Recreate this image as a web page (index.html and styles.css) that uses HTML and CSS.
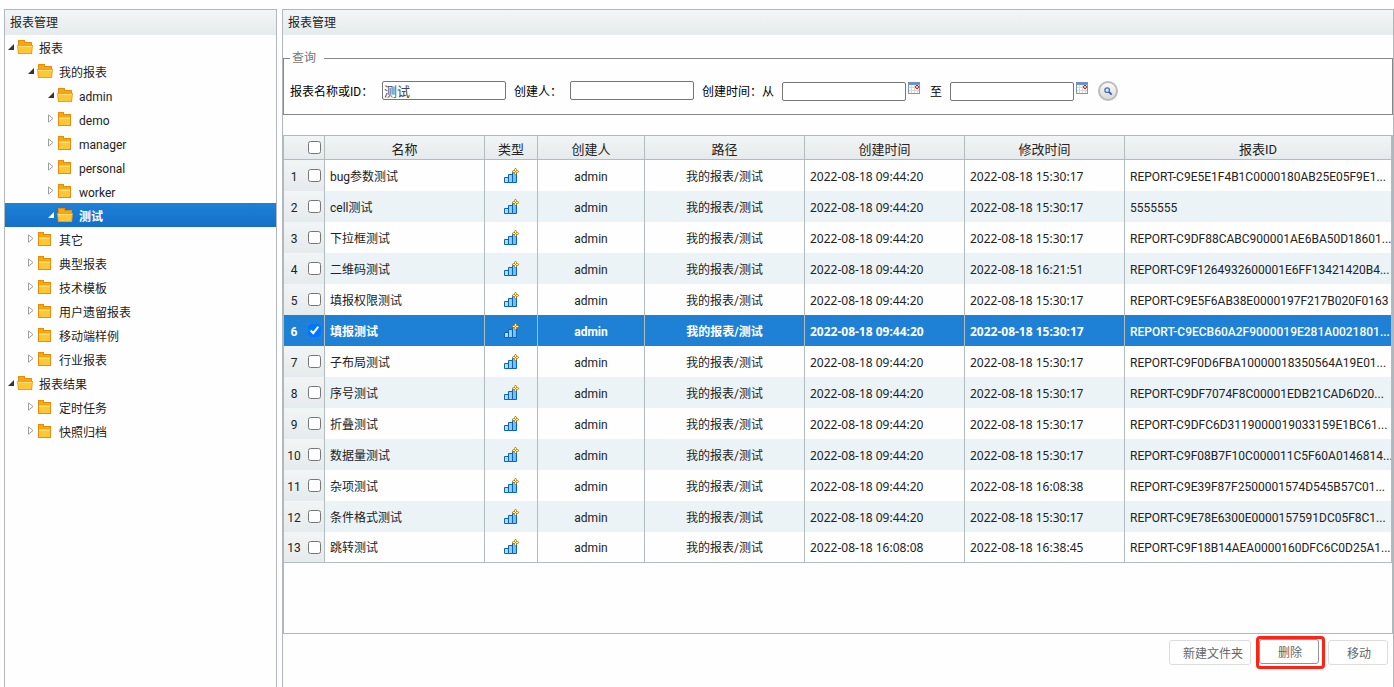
FILE: index.html
```
<!DOCTYPE html>
<html lang="zh-CN">
<head>
<meta charset="utf-8">
<title>报表管理</title>
<link rel="stylesheet" href="styles.css">
</head>
<body>
<svg class="defs" width="0" height="0" aria-hidden="true">
  <defs>
    <linearGradient id="bar" x1="0" x2="1" y1="0" y2="0"><stop offset="0" stop-color="#c0e5ff"/><stop offset="1" stop-color="#62b8fa"/></linearGradient>
    <symbol id="open" viewBox="0 0 16 14"><path d="M1 0h7v2h7v4H1z" fill="#f7a80b"/><path d="M1.500 5V.5h6v2h7V5" fill="none" stroke="#e78a10"/><path d="M0 5h16l-1 9H1z" fill="#f0a010"/><path d="M1 6h14l-1 7H2z" fill="#ffc733"/><path d="M1 6.500h14" stroke="#ffe07a"/></symbol>
    <symbol id="closed" viewBox="0 0 16 14"><path d="M1 0h6v2h7v12H1z" fill="#e88c10"/><path d="M2 1h4v2h7v3H2z" fill="#f7a900"/><path d="M2 5h11v8H2z" fill="#ffc733"/><path d="M2 6.500h11" stroke="#ffe07a"/></symbol>
    <symbol id="down" viewBox="0 0 6 6"><path d="M6 0v6H0z" fill="currentColor"/></symbol>
    <symbol id="right" viewBox="0 0 6 9"><path d="M.5.900v7.200L5 4.500z" fill="#fff" stroke="#a0a0a0"/></symbol>
    <symbol id="chart" viewBox="0 0 16 16"><path d="M1.500 14.500v-5h4v5zM5.500 14.500v-8h4v8zM9.500 14.500v-10h4v10z" fill="url(#bar)" stroke="#0b64b8"/><path d="M12 0h1l1 2 2 1v1l-2 1-1 2h-1l-1-2-2-1V3l2-1z" fill="#b88a1a"/><path d="M12 1h1v2h2v1h-2v2h-1V4h-2V3h2z" fill="#fff4b8"/><path d="M12 3h1v1h-1z" fill="#b88a1a"/></symbol>
    <symbol id="calendar" viewBox="0 0 12 12"><path d="M0 0h12v12H0z" fill="#7898c4"/><path d="M1 3h10v8H1z" fill="#fff"/><path d="M0 1h12" stroke="#6d90c2" stroke-width="2"/><path d="M1 5.500h10M1 8.500h10M3.500 3v8M6.500 3v8M9.500 3v8" stroke="#ddd6cf"/><circle cx="9" cy="5" r="1.500" fill="#fff" stroke="#9d1820"/></symbol>
  </defs>
</svg>
<div class="layout">
  <aside class="panel side">
    <h1 class="panel-title">报表管理</h1>
    <ul class="tree">
      <li class="node l1"><svg class="arrow open"><use href="#down"/></svg><svg class="folder"><use href="#open"/></svg>报表</li>
      <li class="node l2"><svg class="arrow open"><use href="#down"/></svg><svg class="folder"><use href="#open"/></svg>我的报表</li>
      <li class="node l3"><svg class="arrow open"><use href="#down"/></svg><svg class="folder"><use href="#open"/></svg>admin</li>
      <li class="node l3"><svg class="arrow"><use href="#right"/></svg><svg class="folder"><use href="#closed"/></svg>demo</li>
      <li class="node l3"><svg class="arrow"><use href="#right"/></svg><svg class="folder"><use href="#closed"/></svg>manager</li>
      <li class="node l3"><svg class="arrow"><use href="#right"/></svg><svg class="folder"><use href="#closed"/></svg>personal</li>
      <li class="node l3"><svg class="arrow"><use href="#right"/></svg><svg class="folder"><use href="#closed"/></svg>worker</li>
      <li class="node l3 current"><svg class="arrow open"><use href="#down"/></svg><svg class="folder"><use href="#open"/></svg>测试</li>
      <li class="node l2"><svg class="arrow"><use href="#right"/></svg><svg class="folder"><use href="#closed"/></svg>其它</li>
      <li class="node l2"><svg class="arrow"><use href="#right"/></svg><svg class="folder"><use href="#closed"/></svg>典型报表</li>
      <li class="node l2"><svg class="arrow"><use href="#right"/></svg><svg class="folder"><use href="#closed"/></svg>技术模板</li>
      <li class="node l2"><svg class="arrow"><use href="#right"/></svg><svg class="folder"><use href="#closed"/></svg>用户遗留报表</li>
      <li class="node l2"><svg class="arrow"><use href="#right"/></svg><svg class="folder"><use href="#closed"/></svg>移动端样例</li>
      <li class="node l2"><svg class="arrow"><use href="#right"/></svg><svg class="folder"><use href="#closed"/></svg>行业报表</li>
      <li class="node l1"><svg class="arrow open"><use href="#down"/></svg><svg class="folder"><use href="#open"/></svg>报表结果</li>
      <li class="node l2"><svg class="arrow"><use href="#right"/></svg><svg class="folder"><use href="#closed"/></svg>定时任务</li>
      <li class="node l2"><svg class="arrow"><use href="#right"/></svg><svg class="folder"><use href="#closed"/></svg>快照归档</li>
    </ul>
  </aside>
  <main class="panel main">
    <h2 class="panel-title">报表管理</h2>
    <fieldset class="query">
      <legend>查询</legend>
      <div class="fields">
        <label class="field name-field"><span>报表名称或ID：</span><input type="text" value="测试"></label>
        <label class="field author-field"><span>创建人：</span><input type="text"></label>
        <label class="field from-field"><span>创建时间：从</span><input type="text"></label>
        <button type="button" class="pick" aria-label="选择开始日期"><svg><use href="#calendar"/></svg></button>
        <label class="field to-field"><span>至</span><input type="text"></label>
        <button type="button" class="pick" aria-label="选择结束日期"><svg><use href="#calendar"/></svg></button>
        <button type="button" class="search" aria-label="查询"><svg viewBox="0 0 10 10"><circle cx="3.500" cy="3.500" r="2.500" fill="#e4efff" stroke="#4a6fc0" stroke-width="1.500"/><path d="m5.500 5.500 3 3" stroke="#3558b0" stroke-width="2"/></svg></button>
      </div>
    </fieldset>
    <div class="grid-box">
      <table class="grid">
        <colgroup><col class="c-no"><col class="c-wide"><col class="c-type"><col class="c-author"><col class="c-wide"><col class="c-wide"><col class="c-wide"><col></colgroup>
        <thead><tr><th class="no"><div><span></span><input type="checkbox" aria-label="全选"></div></th><th>名称</th><th>类型</th><th>创建人</th><th>路径</th><th>创建时间</th><th>修改时间</th><th>报表ID</th></tr></thead>
        <tbody>
        <tr><td class="no"><div><span>1</span><input type="checkbox" aria-label="选择第1行"></div></td><td>bug参数测试</td><td class="mid"><svg class="chart"><use href="#chart"/></svg></td><td class="mid">admin</td><td class="mid">我的报表/测试</td><td class="time">2022-08-18 09:44:20</td><td class="time">2022-08-18 15:30:17</td><td>REPORT-C9E5E1F4B1C0000180AB25E05F9E1...</td></tr>
        <tr><td class="no"><div><span>2</span><input type="checkbox" aria-label="选择第2行"></div></td><td>cell测试</td><td class="mid"><svg class="chart"><use href="#chart"/></svg></td><td class="mid">admin</td><td class="mid">我的报表/测试</td><td class="time">2022-08-18 09:44:20</td><td class="time">2022-08-18 15:30:17</td><td>5555555</td></tr>
        <tr><td class="no"><div><span>3</span><input type="checkbox" aria-label="选择第3行"></div></td><td>下拉框测试</td><td class="mid"><svg class="chart"><use href="#chart"/></svg></td><td class="mid">admin</td><td class="mid">我的报表/测试</td><td class="time">2022-08-18 09:44:20</td><td class="time">2022-08-18 15:30:17</td><td>REPORT-C9DF88CABC900001AE6BA50D18601...</td></tr>
        <tr><td class="no"><div><span>4</span><input type="checkbox" aria-label="选择第4行"></div></td><td>二维码测试</td><td class="mid"><svg class="chart"><use href="#chart"/></svg></td><td class="mid">admin</td><td class="mid">我的报表/测试</td><td class="time">2022-08-18 09:44:20</td><td class="time">2022-08-18 16:21:51</td><td>REPORT-C9F1264932600001E6FF13421420B4...</td></tr>
        <tr><td class="no"><div><span>5</span><input type="checkbox" aria-label="选择第5行"></div></td><td>填报权限测试</td><td class="mid"><svg class="chart"><use href="#chart"/></svg></td><td class="mid">admin</td><td class="mid">我的报表/测试</td><td class="time">2022-08-18 09:44:20</td><td class="time">2022-08-18 15:30:17</td><td>REPORT-C9E5F6AB38E0000197F217B020F0163</td></tr>
        <tr class="current"><td class="no"><div><span>6</span><input type="checkbox" checked aria-label="选择第6行"></div></td><td>填报测试</td><td class="mid"><svg class="chart"><use href="#chart"/></svg></td><td class="mid">admin</td><td class="mid">我的报表/测试</td><td class="time">2022-08-18 09:44:20</td><td class="time">2022-08-18 15:30:17</td><td class="id">REPORT-C9ECB60A2F9000019E281A0021801...</td></tr>
        <tr><td class="no"><div><span>7</span><input type="checkbox" aria-label="选择第7行"></div></td><td>子布局测试</td><td class="mid"><svg class="chart"><use href="#chart"/></svg></td><td class="mid">admin</td><td class="mid">我的报表/测试</td><td class="time">2022-08-18 09:44:20</td><td class="time">2022-08-18 15:30:17</td><td>REPORT-C9F0D6FBA10000018350564A19E01...</td></tr>
        <tr><td class="no"><div><span>8</span><input type="checkbox" aria-label="选择第8行"></div></td><td>序号测试</td><td class="mid"><svg class="chart"><use href="#chart"/></svg></td><td class="mid">admin</td><td class="mid">我的报表/测试</td><td class="time">2022-08-18 09:44:20</td><td class="time">2022-08-18 15:30:17</td><td>REPORT-C9DF7074F8C00001EDB21CAD6D20...</td></tr>
        <tr><td class="no"><div><span>9</span><input type="checkbox" aria-label="选择第9行"></div></td><td>折叠测试</td><td class="mid"><svg class="chart"><use href="#chart"/></svg></td><td class="mid">admin</td><td class="mid">我的报表/测试</td><td class="time">2022-08-18 09:44:20</td><td class="time">2022-08-18 15:30:17</td><td>REPORT-C9DFC6D3119000019033159E1BC61...</td></tr>
        <tr><td class="no"><div><span>10</span><input type="checkbox" aria-label="选择第10行"></div></td><td>数据量测试</td><td class="mid"><svg class="chart"><use href="#chart"/></svg></td><td class="mid">admin</td><td class="mid">我的报表/测试</td><td class="time">2022-08-18 09:44:20</td><td class="time">2022-08-18 15:30:17</td><td>REPORT-C9F08B7F10C000011C5F60A0146814...</td></tr>
        <tr><td class="no"><div><span>11</span><input type="checkbox" aria-label="选择第11行"></div></td><td>杂项测试</td><td class="mid"><svg class="chart"><use href="#chart"/></svg></td><td class="mid">admin</td><td class="mid">我的报表/测试</td><td class="time">2022-08-18 09:44:20</td><td class="time">2022-08-18 16:08:38</td><td>REPORT-C9E39F87F2500001574D545B57C01...</td></tr>
        <tr><td class="no"><div><span>12</span><input type="checkbox" aria-label="选择第12行"></div></td><td>条件格式测试</td><td class="mid"><svg class="chart"><use href="#chart"/></svg></td><td class="mid">admin</td><td class="mid">我的报表/测试</td><td class="time">2022-08-18 09:44:20</td><td class="time">2022-08-18 15:30:17</td><td>REPORT-C9E78E6300E0000157591DC05F8C1...</td></tr>
        <tr><td class="no"><div><span>13</span><input type="checkbox" aria-label="选择第13行"></div></td><td>跳转测试</td><td class="mid"><svg class="chart"><use href="#chart"/></svg></td><td class="mid">admin</td><td class="mid">我的报表/测试</td><td class="time">2022-08-18 16:08:08</td><td class="time">2022-08-18 16:38:45</td><td>REPORT-C9F18B14AEA0000160DFC6C0D25A1...</td></tr>
        </tbody>
      </table>
    </div>
    <div class="actions">
      <button type="button" class="btn">新建文件夹</button>
      <span class="mark"><button type="button" class="btn focus">删除</button></span>
      <button type="button" class="btn">移动</button>
    </div>
  </main>
</div>
</body>
</html>
```
FILE: styles.css
```
* { box-sizing: border-box; }
body {
  margin: 0;
  background: #fefefe;
  color: #222;
  font: 12px/18px Roboto, "Noto Sans CJK SC", sans-serif;
}
button, input { font: inherit; }
.defs { position: absolute; }
.layout {
  display: flex;
  gap: 5px;
  min-height: 100vh;
  padding: 9px 0 0 4px;
}
.panel { border: 1px solid #b1b7be; border-bottom: 0; }
.side { flex: 0 0 273px; }
.main { flex: 1; min-width: 0; }
.panel-title {
  height: 25px;
  margin: 0;
  padding: 0 5px;
  background: linear-gradient(#f3f6f7, #e5eaec);
  font-size: 12px;
  font-weight: 400;
  line-height: 27px;
}

.tree { margin: 0; padding: 0; list-style: none; line-height: 28px; }
.node { display: flex; height: 24px; padding-left: 3px; }
.node.l2 { padding-left: 23px; }
.node.l3 { padding-left: 43px; }
.node.current {
  background: linear-gradient(#1e81d6, #146fca);
  color: #fff;
  font-weight: 700;
}
.arrow { width: 6px; height: 9px; margin: 7px 3px 0 0; }
.arrow.open { height: 6px; margin-top: 9px; color: #333; }
.current .arrow.open { color: #fff; }
.folder { width: 16px; height: 14px; margin: 5px 6px 0 0; }

.query {
  min-width: 0;
  margin: 14px 0 20px;
  padding: 0 6px 13px;
  border: 1px solid #888;
}
.query legend {
  width: 34px;
  padding: 0 2px;
  color: #777;
}
.fields {
  display: flex;
  align-items: center;
  padding-top: 14px;
  color: #000;
}
.field { display: flex; align-items: center; }
.field span { padding-top: 2px; }
.field input {
  width: 124px;
  height: 19px;
  padding: 0 1px;
  border: 1px solid #767676;
  border-radius: 2px;
  background: #fff;
  color: #444;
  font-size: 13px;
}
.name-field span { width: 92px; }
.author-field span { width: 56px; }
.author-field, .from-field { margin-left: 8px; }
.from-field span { width: 80px; }
.to-field { margin-left: 10px; }
.to-field span { width: 20px; }
.name-field, .author-field { align-items: flex-start; }
.from-field, .to-field { align-items: flex-end; }
.pick {
  align-self: flex-start;
  width: 12px;
  height: 13px;
  margin-left: 2px;
  padding: 1px 0 0;
  border: 0;
  background: none;
}
.pick svg { display: block; width: 12px; height: 12px; }
.search {
  display: grid;
  place-items: center;
  width: 20px;
  height: 20px;
  margin-left: 10px;
  padding: 0;
  border: 2px solid #bbb;
  border-radius: 50%;
  background: linear-gradient(#fafafa, #d9d9d9);
}
.search svg { width: 9px; height: 9px; }

.grid-box {
  min-height: 499px;
  border: 1px solid #b1b7be;
}
.grid { width: 100%; table-layout: fixed; border-spacing: 0; }
.c-no { width: 41px; }
.c-wide { width: 160px; }
.c-type { width: 53px; }
.c-author { width: 107px; }
.grid th, .grid td {
  overflow: hidden;
  padding: 2px 0 0 5px;
  border-right: 1px solid #b1bcbf;
  text-align: left;
  white-space: nowrap;
}
.grid th {
  height: 24px;
  padding: 4px 0 0;
  border-bottom: 1px solid #b1bcbf;
  background: linear-gradient(#f2f5f6, #e5eaec);
  font-size: 13px;
  font-weight: 400;
  line-height: 18px;
  text-align: center;
}
.grid td { height: 31px; }
.grid tbody tr:nth-child(even) { background: #ebf3f6; }
.grid tbody tr:last-child td { border-bottom: 1px solid #b1bcbf; }
.grid .mid { padding-left: 0; text-align: center; }
.grid .time { font-family: "Noto Sans", sans-serif; }
.grid .no { padding: 0; }
.grid td.no { background: linear-gradient(#f2f5f6, #e5eaec); }
.no div { display: flex; align-items: center; }
.no span { width: 20px; padding-top: 2px; text-align: center; }
.no input { width: 13px; height: 13px; margin: 0 0 0 4px; }
.grid tbody tr.current, .grid tr.current td.no { background: #1e81d6; }
.grid tr.current { color: #fff; font-weight: 700; }
.grid tr.current .id { font-weight: 500; }
.chart { display: block; width: 16px; height: 16px; margin: 0 auto 2px; }

.actions {
  display: flex;
  align-items: center;
  justify-content: flex-end;
  gap: 3px;
  padding: 2px 5px;
}
.btn {
  height: 25px;
  padding: 2px 7px 0 13px;
  border: 1px solid #ddd;
  border-radius: 3px;
  background: #fff;
  color: #666;
}
.btn:last-child, .btn.focus { width: 60px; padding: 2px 0 0 2px; }
.btn.focus { display: block; border-color: #8f959b; }
.mark {
  width: 69px;
  margin-left: 2px;
  padding: 0 3px 2px 0;
  border: 3px solid #ff2216;
  border-radius: 4px;
}
```
